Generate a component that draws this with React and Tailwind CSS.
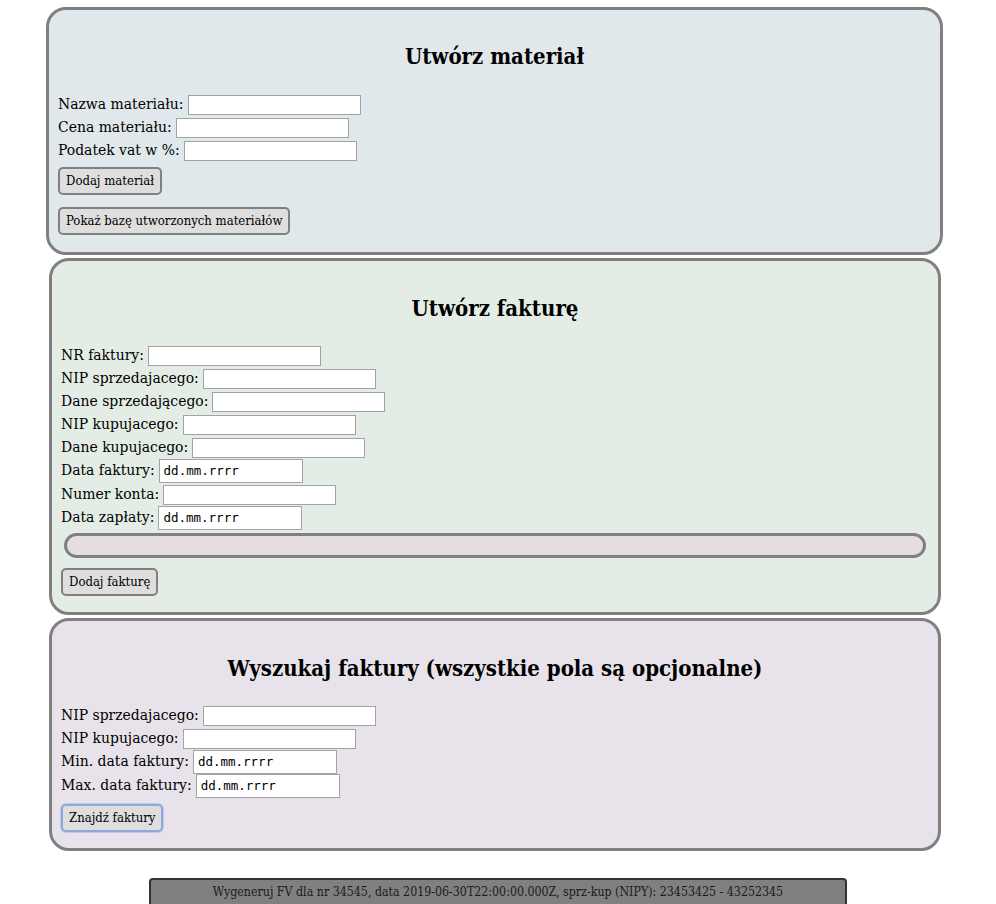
import React from "react";

const font = "font-['DejaVu_Serif_Condensed','DejaVu_Serif',serif]";

function TextField({ label }) {
  return (
    <div className="flex h-[23px] items-center">
      <span className="text-[15.5px] text-black">{label}</span>
      <span className="ml-[4px] h-[20px] w-[173px] border border-[#a3a3a3] bg-white"></span>
    </div>
  );
}

function DateField({ label }) {
  return (
    <div className="flex h-[24px] items-center">
      <span className="text-[15.5px] text-black">{label}</span>
      <span className="ml-[4px] flex h-[24px] w-[144px] items-center border border-[#a3a3a3] bg-white pl-[4px] font-['DejaVu_Sans_Mono',monospace] text-[12.5px] text-black">
        dd.mm.rrrr
      </span>
    </div>
  );
}

function Btn({ children, focused = false }) {
  return (
    <button
      className={`h-[28px] rounded-[5px] border-2 bg-[#dedede] px-[6px] text-[13px] text-black ${
        focused ? "border-[#8fa8d8] shadow-[0_0_0_1px_#b9c9ea]" : "border-[#808080]"
      }`}
    >
      {children}
    </button>
  );
}

function Heading({ children, className = "mb-[22px]" }) {
  return (
    <h2 className={`${className} h-[28px] text-center text-[22px] leading-[28px] font-bold text-black`}>
      {children}
    </h2>
  );
}

export default function App() {
  return (
    <div className={`${font} min-h-[904px] bg-white pt-[7px]`}>
      {/* materiał */}
      <section className="ml-[46px] w-[897px] rounded-[20px] border-[3px] border-[#808080] bg-[#e1e8eb] px-[9px] pt-[32px] pb-[17px]">
        <Heading className="mb-[23px]">Utwórz materiał</Heading>
        <TextField label="Nazwa materiału:" />
        <TextField label="Cena materiału:" />
        <TextField label="Podatek vat w %:" />
        <div className="mt-[5px]">
          <Btn>Dodaj materiał</Btn>
        </div>
        <div className="mt-[12px]">
          <Btn>Pokaż bazę utworzonych materiałów</Btn>
        </div>
      </section>

      {/* faktura */}
      <section className="mt-[3px] ml-[49px] w-[892px] rounded-[20px] border-[3px] border-[#808080] bg-[#e4ede5] px-[9px] pt-[33px] pb-[16px]">
        <Heading>Utwórz fakturę</Heading>
        <TextField label="NR faktury:" />
        <TextField label="NIP sprzedajacego:" />
        <TextField label="Dane sprzedającego:" />
        <TextField label="NIP kupujacego:" />
        <TextField label="Dane kupujacego:" />
        <DateField label="Data faktury:" />
        <TextField label="Numer konta:" />
        <DateField label="Data zapłaty:" />
        <div className="mx-[3px] mt-[3px] h-[25px] rounded-full border-[3px] border-[#808080] bg-[#e6dde0]"></div>
        <div className="mt-[10px]">
          <Btn>Dodaj fakturę</Btn>
        </div>
      </section>

      {/* wyszukiwanie */}
      <section className="mt-[3px] ml-[49px] w-[892px] rounded-[20px] border-[3px] border-[#808080] bg-[#e8e3ea] px-[9px] pt-[33px] pb-[16px]">
        <Heading>Wyszukaj faktury (wszystkie pola są opcjonalne)</Heading>
        <TextField label="NIP sprzedajacego:" />
        <TextField label="NIP kupujacego:" />
        <DateField label="Min. data faktury:" />
        <DateField label="Max. data faktury:" />
        <div className="mt-[6px]">
          <Btn focused>Znajdź faktury</Btn>
        </div>
      </section>

      <div className="mt-[27px] ml-[149px] flex h-[30px] w-[698px] justify-center rounded-t-[4px] border-2 border-[#333333] bg-[#808080] pt-[3px] text-[12.3px] text-[#1a1a1a]">
        Wygeneruj FV dla nr 34545, data 2019-06-30T22:00:00.000Z, sprz-kup (NIPY): 23453425 - 43252345
      </div>
    </div>
  );
}
